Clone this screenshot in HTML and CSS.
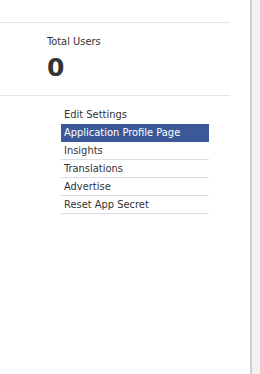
FILE: index.html
```html
<!DOCTYPE html>
<html lang="en">
<head>
    <meta name="viewport" content="width=device-width">
    <title>Application Dashboard</title>
    <link rel="stylesheet" href="styles.css">
</head>

<body>
    <div class="page">
        <div class="content">
            <div class="stats">
                <div class="stat">
                    <div class="stat-label">Total Users</div>
                    <div class="stat-value">0</div>
                </div>
            </div>
            <ul class="actions">
                <li><a href="#">Edit Settings</a></li>
                <li class="selected"><a href="#">Application Profile Page</a></li>
                <li><a href="#">Insights</a></li>
                <li><a href="#">Translations</a></li>
                <li><a href="#">Advertise</a></li>
                <li><a href="#">Reset App Secret</a></li>
            </ul>
        </div>
        <div class="rail"></div>
    </div>
</body>
</html>
```

FILE: styles.css
```css
html, body {
    background-color: white;
}
body {
    margin: 0;
    padding: 0;
    font-family: "DejaVu Sans Condensed", "DejaVu Sans", Verdana, sans-serif;
    font-stretch: condensed;
    font-size: 11px;
    color: #333;
}
.page {
    display: flex;
    height: 374px;
}
.content {
    width: 250px;
    padding-top: 22px;
}
.stats {
    width: 230px;
    border-top: 1px solid #e5e5e5;
    border-bottom: 1px solid #e5e5e5;
    padding: 12px 0 13px 47px;
    box-sizing: border-box;
    height: 74px;
}
.stat-label {
    line-height: 14px;
}
.stat-value {
    font-family: "DejaVu Sans", Verdana, sans-serif;
    font-stretch: normal;
    font-size: 25px;
    font-weight: bold;
    line-height: 30px;
    margin-top: 4px;
}
.actions {
    list-style: none;
    margin: 10px 0 0 61px;
    padding: 0;
    width: 148px;
}
.actions li {
    border-bottom: 1px solid #d8dfea;
}
.actions li:first-child {
    border-bottom-color: white;
}
.actions a {
    display: block;
    padding: 0 3px;
    line-height: 17px;
    color: #333;
    text-decoration: none;
}
.actions li.selected {
    background-color: #3b5998;
    border-bottom-color: #3b5998;
}
.actions li.selected a {
    color: white;
}
.rail {
    flex: 1;
    background-color: #f2f2f2;
    border-left: 2px solid #cfcfcf;
}
```
